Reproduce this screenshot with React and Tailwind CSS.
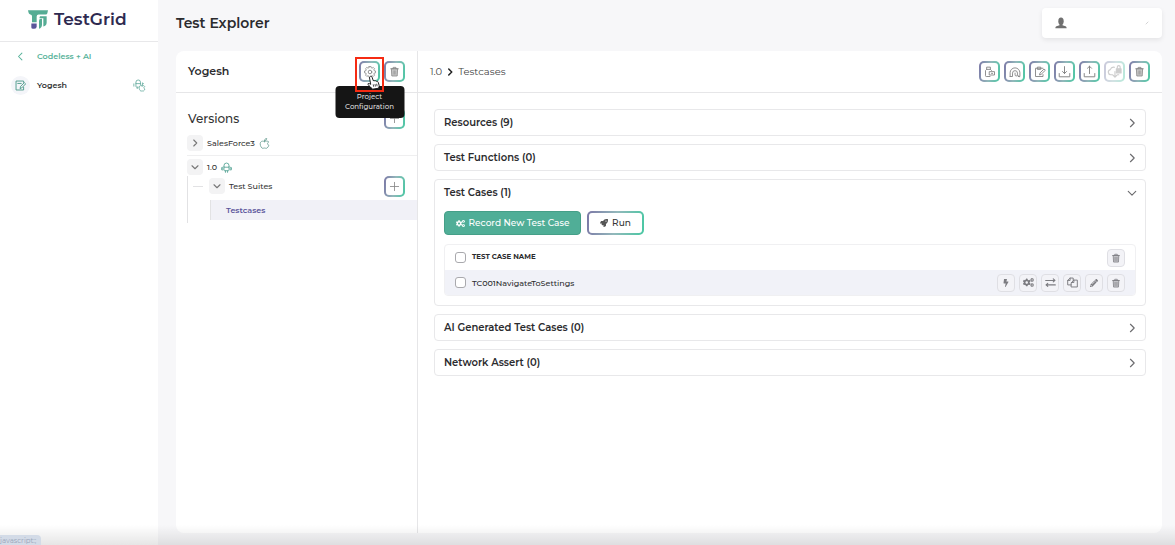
import React from "react";
import { FaCogs, FaBolt, FaPencilAlt, FaRocket } from "react-icons/fa";

const gradientBorder =
  "border-2 border-transparent [background:linear-gradient(#fff,#fff)_padding-box,linear-gradient(100deg,#7b77a6,#93b8bb_50%,#48c8a3)_border-box]";

function Svg({ className, children, strokeWidth = 1.2, box = 16 }) {
  return (
    <svg
      viewBox={`0 0 ${box} ${box}`}
      fill="none"
      stroke="currentColor"
      strokeWidth={strokeWidth}
      strokeLinecap="round"
      strokeLinejoin="round"
      className={className}
      aria-hidden="true"
    >
      {children}
    </svg>
  );
}

function Chevron({ dir = "right", className, strokeWidth = 1.8 }) {
  const d = { right: "M5.5 2l6 6-6 6", left: "M10.5 2l-6 6 6 6", down: "M2 5.5l6 6 6-6" }[dir];
  return (
    <Svg className={className} strokeWidth={strokeWidth}>
      <path d={d} />
    </Svg>
  );
}

function Trash({ className }) {
  return (
    <Svg className={className} strokeWidth={1.2}>
      <path d="M2.500 4h11M6 4V2h4v2" />
      <path d="M3.5 4.5l.6 10h7.8l.6-10z" fill="currentColor" fillOpacity="0.4" />
      <path d="M6.2 7v5M9.800 7v5M8 7v5" strokeWidth="0.8" />
    </Svg>
  );
}

function NotePencil({ className }) {
  return (
    <Svg className={className} strokeWidth={1.3}>
      <path d="M12.500 10.500v4H1.500v-13h11v2" />
      <path d="M4 5h5" />
      <path d="M7.500 12l.7-2.800L13.600 3.800l1.900 1.800-5.400 5.600z" />
    </Svg>
  );
}

function Apple({ className }) {
  return (
    <Svg className={className}>
      <path d="M8 5.200C6.400 4.200 3.700 4.200 2.300 6.200.9 8.600 2.200 12.700 4.400 14.700c1.200.8 2.400-.1 3.600-.1s2.400.9 3.600.1c1.300-1 2.300-2.500 2.800-4-2.800-1.100-2.500-3.900-.2-5-1.700-1.600-4.400-1.500-6.200-.5z" />
      <path d="M8 4C8 2 9.200.8 11.200.600 11.200 2.600 10 4 8 4z" />
    </Svg>
  );
}

function Android({ className }) {
  return (
    <Svg className={className} strokeWidth={1.3}>
      <path d="M4.300 7V5.500a3.700 4 0 0 1 7.400 0V7z" />
      <path d="M4.300 7v4.700a1 1 0 0 0 1 1h5.400a1 1 0 0 0 1-1V7" />
      <path d="M.8 8.500a.9.9 0 0 1 1.800 0v2.500a.9.9 0 0 1-1.800 0zM13.400 8.500a.9.9 0 0 1 1.800 0v2.500a.9.900 0 0 1-1.800 0z" />
      <path d="M6.500 13v2M9.500 13v2" />
    </Svg>
  );
}

function Devices({ className }) {
  return (
    <Svg className={className} box={20} strokeWidth={1.3}>
      <path d="M4.500 6.500V5a3.500 3.500 0 0 1 7 0v1.500zM11.500 6.500v2M4.500 6.500v5a1 1 0 0 0 1 1H8M1.300 7.500v3.500M14.500 6v2M6.500 12.800v2" />
      <path d="M14 10.500c-1.500-1-4-.5-4.500 1.800-.5 2.500 1 5.500 2.500 6.200.8.300 1.300-.2 2-.2s1.200.5 2 .2c1.200-.6 2-2 2.300-3-2-.9-1.900-3-.3-4-.9-1.500-2.700-1.700-4-1zM14 9.500c0-1.400.9-2.200 2.200-2.500" />
    </Svg>
  );
}

function Gear({ className }) {
  return (
    <Svg className={className} strokeWidth={1.2}>
      <path d="M6.700 1h2.600l.4 1.900 1.300.6 1.700-1 1.800 1.800-1 1.700.6 1.300 1.900.4v2.600l-1.900.4-.6 1.300 1 1.700-1.800 1.800-1.700-1-1.300.6-.4 1.900H6.700l-.4-1.900-1.300-.6-1.700 1-1.800-1.800 1-1.700-.6-1.300L0 10.300V7.700l1.900-.4L2.500 6l-1-1.700 1.800-1.800 1.700 1 1.300-.6z" transform="translate(.7 -.4) scale(.92)" />
      <circle cx="8" cy="8" r="2.400" />
    </Svg>
  );
}

function Logo() {
  return (
    <svg viewBox="0 0 60 56" className="h-[19px] w-5" aria-hidden="true">
      <path d="M0 0h60l-2 9a5 5 0 0 1-5 4H32a6 6 0 0 0-6 6v17H12V18a5 5 0 0 0-5-5C3 12 1 7 0 0z" fill="#55ac94" />
      <path d="M10 40h16v9a7 7 0 0 1-7 7h-4a5 5 0 0 1-5-5z" fill="#5a559a" />
      <path d="M33 32a6 6 0 0 1 6-6h3v18a13 13 0 0 1-9 12z" fill="#55ac94" />
      <path d="M36 18h20v20a12 12 0 0 1-10 11V24H34z" fill="#55ac94" />
    </svg>
  );
}

function ToolButton({ label, children, faded = false }) {
  return (
    <button
      type="button"
      aria-label={label}
      disabled={faded}
      className={`flex size-[21px] shrink-0 items-center justify-center rounded-[5px] text-[#858585] disabled:opacity-40 ${gradientBorder}`}
    >
      {children}
    </button>
  );
}

function RowButton({ label, children }) {
  return (
    <button
      type="button"
      aria-label={label}
      className="flex size-[18px] items-center justify-center rounded border border-[#dfdfe4] bg-[#f3f3f7] text-[#7c7c81]"
    >
      {children}
    </button>
  );
}

function Toggle({ label, dir }) {
  return (
    <button
      type="button"
      aria-label={label}
      className="flex size-4 shrink-0 items-center justify-center rounded bg-[#f3f3f4] text-[#777]"
    >
      <Chevron dir={dir} className="size-2" strokeWidth={2.2} />
    </button>
  );
}

function Panel({ title, open = false, children }) {
  return (
    <section className="rounded border border-[#e8e8ea] bg-white">
      <h3>
        <button
          type="button"
          aria-expanded={open}
          className="flex h-[25px] w-full items-center justify-between pr-2 pl-[9px] text-left text-[10px] font-semibold text-[#2b2b2e]"
        >
          {title}
          <Chevron dir={open ? "down" : "right"} className="size-[10px] text-[#6b6b6e]" />
        </button>
      </h3>
      {children}
    </section>
  );
}

function Checkbox({ label }) {
  return (
    <input
      type="checkbox"
      aria-label={label}
      className="block size-[11px] appearance-none rounded-[3px] border border-[#a9a9ad] bg-white"
    />
  );
}

function Sidebar() {
  return (
    <aside className="flex w-[158px] shrink-0 flex-col bg-white">
      <a href="#home" className="flex h-[42px] items-center gap-[6px] border-b border-[#e8e8ea] pb-[2px] pl-7">
        <Logo />
        <span className="text-[17px] font-semibold text-[#2e2a50]">TestGrid</span>
      </a>
      <nav className="flex flex-col">
        <a href="#codeless" className="flex h-7 items-center pl-4 text-[8px] font-semibold text-[#58b39b]">
          <Chevron dir="left" className="mr-3 size-[9px]" />
          Codeless + AI
        </a>
        <a href="#yogesh" className="flex h-[30px] items-center pr-3 pl-[11px] text-[8px] font-semibold text-[#333]">
          <span className="mr-[7px] flex size-[19px] items-center justify-center rounded-full bg-[#f4f5f9]">
            <NotePencil className="size-[11px] text-[#479687]" />
          </span>
          Yogesh
          <Devices className="ml-auto size-[13px] text-[#66ac9f]" />
        </a>
      </nav>
    </aside>
  );
}

function ProjectTree() {
  return (
    <section className="flex w-[242px] shrink-0 flex-col border-r border-[#e6e6e8]">
      <header className="flex h-[42px] items-center justify-between border-b border-[#e6e6e8] pr-3 pl-3">
        <h2 className="text-[11px] font-semibold text-[#2b2b2e]">Yogesh</h2>
        <div className="flex gap-1">
          <div className="relative">
            <ToolButton label="Project configuration">
              <Gear className="size-3" />
            </ToolButton>
            <div className="absolute -top-[4px] -left-1 z-20 h-[35px] w-[29px] border-2 border-[#f52b13]" />
            <div
              role="tooltip"
              className="absolute top-[25px] left-1/2 z-10 flex h-8 w-[69px] -translate-x-1/2 items-center justify-center rounded bg-[#151515] text-center text-[7px] leading-[10px] font-medium text-[#dedede]"
            >
              Project Configuration
            </div>
            <svg viewBox="0 0 14 16" className="absolute top-[14px] left-[8px] z-30 h-[15px] w-[13px]" aria-hidden="true">
              <path
                d="M3.500 1.500c.9-.5 1.700 0 2 .8L6.700 6c.8-.4 1.500-.1 1.700.3.8-.4 1.500 0 1.800.5.900-.3 1.600.1 1.900 1l1 3.400c.2 1-.2 2-.8 3l-6.500 1c-1-1.500-3.500-3.700-4.800-5C.2 9.400 1.700 8.300 4 10L2.700 3c-.1-.7.200-1.200.8-1.500z"
                fill="#fff"
                stroke="#111"
                strokeWidth="1"
              />
              <path d="M6.700 10l.5 2.600M8.600 9.700l.5 2.600M10.400 9.400l.5 2.600" stroke="#111" strokeWidth=".8" />
            </svg>
          </div>
          <ToolButton label="Delete project">
            <Trash className="size-[11px]" />
          </ToolButton>
        </div>
      </header>

      <div className="flex items-center justify-between pt-[15px] pr-3 pl-3">
        <h3 className="text-xs leading-5 font-medium text-[#333]">Versions</h3>
        <ToolButton label="Add version">
          <Svg className="size-[11px]"><path d="M8 2v12M2 8h12" /></Svg>
        </ToolButton>
      </div>

      <ul className="pl-[11px] text-[8px] font-medium text-[#333]">
        <li className="flex h-[27px] items-center border-b border-[#efeff0] pt-[2px]">
          <Toggle label="Expand SalesForce3" dir="right" />
          <span className="ml-1">SalesForce3</span>
          <Apple className="ml-1 size-[11px] text-[#6b9f94]" />
        </li>
        <li>
          <div className="flex h-5 items-center pt-[2px]">
            <Toggle label="Collapse 1.0" dir="down" />
            <span className="ml-1">1.0</span>
            <Android className="ml-1 size-[11px] text-[#58a596]" />
          </div>
          <ul className="border-l border-[#e2e2e4] pb-[3px]">
            <li>
              <div className="flex h-5 items-center pr-3">
                <span className="ml-[5px] w-[10px] border-t border-[#e2e2e4]" />
                <span className="mr-1 ml-[6px] flex">
                  <Toggle label="Collapse Test Suites" dir="down" />
                </span>
                <span className="mr-auto">Test Suites</span>
                <ToolButton label="Add test suite">
                  <Svg className="size-[11px]"><path d="M8 2v12M2 8h12" /></Svg>
                </ToolButton>
              </div>
              <a
                href="#testcases"
                className="mt-1 ml-[22px] flex h-5 items-center border-l border-[#e2e2e4] bg-[#f1f1f7] pl-[15px] font-semibold text-[#5b559b]"
              >
                Testcases
              </a>
            </li>
          </ul>
        </li>
      </ul>
    </section>
  );
}

function Toolbar() {
  return (
    <div className="flex gap-1">
      <ToolButton label="Copy build">
        <Svg className="size-3">
          <path d="M8 14H3a1 1 0 0 1-1-1V6l1.500-1.500h5L10 6M3.500 4.500V1.500h5v3" />
          <path d="M7.500 7.500H14V12H7.500zM10 9.800h1.500" />
        </Svg>
      </ToolButton>
      <ToolButton label="Inspect">
        <Svg className="size-3">
          <path d="M1.500 14V9a6.500 6.500 0 0 1 13 0v5h-2.200M1.500 14h3.200V9.500a3.300 3.300 0 0 1 6.600 0v2.200a1.600 1.600 0 1 1-3.200 0V9.500M11.500 12l2 2.500" />
        </Svg>
      </ToolButton>
      <ToolButton label="Edit">
        <Svg className="size-3">
          <path d="M12 11.500V14H2V3h10M5 1.500h4v3H5z" />
          <path d="M7.500 11.500l.6-2.300L13.400 4l1.700 1.700-5.300 5.200z" />
        </Svg>
      </ToolButton>
      <ToolButton label="Import">
        <Svg className="size-[13px]">
          <path d="M1.500 10.500v4h13v-4M8 2v8.500M5.500 8L8 10.500 10.500 8" />
        </Svg>
      </ToolButton>
      <ToolButton label="Export">
        <Svg className="size-[13px]">
          <path d="M1.500 10.500v4h13v-4M8 10.500v-9M5.500 4L8 1.500 10.500 4" />
        </Svg>
      </ToolButton>
      <ToolButton label="Sync (locked)" faded>
        <Svg className="size-[15px]">
          <path d="M6 11.500H4A2.800 2.800 0 0 1 3.500 6 4 4 0 0 1 8 3.500M8.500 8v6M6.500 12l2 2 2-2M11 11.500h1.500" />
          <path d="M10 5h5v4.500h-5z" fill="currentColor" />
          <path d="M11 5V3.200a1.500 1.500 0 0 1 3 0V5" />
        </Svg>
      </ToolButton>
      <ToolButton label="Delete version">
        <Trash className="size-[11px]" />
      </ToolButton>
    </div>
  );
}

function TestCases() {
  return (
    <div className="px-[9px] pt-[6px] pb-[9px]">
      <div className="flex gap-[6px]">
        <button
          type="button"
          className="flex h-6 w-[137px] items-center justify-center gap-1 rounded border border-[#459f88] bg-[#50ae97] text-[9px] font-medium text-white"
        >
          <FaCogs className="size-[9px]" />
          Record New Test Case
        </button>
        <button
          type="button"
          className={`flex h-6 w-[57px] items-center justify-center gap-1 rounded-[5px] text-[9px] font-medium text-[#333] ${gradientBorder}`}
        >
          <FaRocket className="size-2 text-[#555]" />
          Run
        </button>
      </div>
      <div className="mt-[9px] overflow-hidden rounded border border-[#f0f0f2]">
        <table className="w-full text-left text-[8px] text-[#2b2b2e]">
          <thead>
            <tr className="h-[25px]">
              <th scope="col" className="w-[27px] pl-[10px]"><Checkbox label="Select all test cases" /></th>
              <th scope="col" className="text-[7px] font-bold">TEST CASE NAME</th>
              <th scope="col" className="pr-[10px]">
                <div className="flex justify-end">
                  <RowButton label="Delete selected"><Trash className="size-[10px]" /></RowButton>
                </div>
              </th>
            </tr>
          </thead>
          <tbody>
            <tr className="h-[25px] bg-[#f1f2f8]">
              <td className="pl-[10px]"><Checkbox label="Select TC001NavigateToSettings" /></td>
              <td className="font-medium">TC001NavigateToSettings</td>
              <td className="pr-[10px]">
                <div className="flex justify-end gap-1">
                  <RowButton label="Quick run"><FaBolt className="size-2" /></RowButton>
                  <RowButton label="Configure"><FaCogs className="size-[11px]" /></RowButton>
                  <RowButton label="Move">
                    <Svg className="size-[11px]" strokeWidth={1.6}>
                      <path d="M1 5h13M12 2.800L14.500 5 12 7.200M15 11.500H2M4 9.300L1.500 11.500 4 13.700" />
                    </Svg>
                  </RowButton>
                  <RowButton label="Duplicate">
                    <Svg className="size-[11px]" strokeWidth={1.4}>
                      <path d="M6 11.500H1V5l3.500-3.500H9V5M4.500 1.500V5H1" />
                      <path d="M6.500 8L10 4.500h5v10H6.500zM10 4.500V8H6.500" />
                    </Svg>
                  </RowButton>
                  <RowButton label="Edit"><FaPencilAlt className="size-2" /></RowButton>
                  <RowButton label="Delete"><Trash className="size-[10px]" /></RowButton>
                </div>
              </td>
            </tr>
          </tbody>
        </table>
      </div>
    </div>
  );
}

export default function App() {
  return (
    <div className="relative flex min-h-screen bg-[#f7f7f9] font-['Montserrat','Inter',sans-serif]">
      <Sidebar />
      <main className="flex min-w-0 flex-1 flex-col pr-[13px] pb-3 pl-[18px]">
        <header className="flex h-[51px] items-start justify-between pt-2">
          <h1 className="text-[14px] leading-[30px] font-semibold text-[#2b2b2e]">Test Explorer</h1>
          <button
            type="button"
            aria-label="Account"
            className="flex h-[30px] w-[120px] items-center justify-between rounded bg-white px-[13px] shadow-[0_2px_5px_rgba(0,0,0,0.08)]"
          >
            <svg viewBox="0 0 16 16" className="size-3 text-[#707070]" fill="currentColor" aria-hidden="true">
              <ellipse cx="8" cy="5.500" rx="3.600" ry="4.800" />
              <path d="M6 9h4v2l4 1.300c1 .4 1.500 1.200 1.500 2.700H.5c0-1.500.5-2.300 1.500-2.700L6 11z" />
            </svg>
            <Svg className="size-1 text-[#c4c4c6]" strokeWidth={3}><path d="M4 12l8-8" /></Svg>
          </button>
        </header>
        <div className="flex flex-1 rounded-lg bg-white">
          <ProjectTree />
          <section className="flex min-w-0 flex-1 flex-col">
            <header className="flex h-[42px] items-center justify-between border-b border-[#e6e6e8] pr-3 pl-3">
              <nav aria-label="Breadcrumb" className="flex items-center gap-1 text-[10px] text-[#444]">
                <a href="#1.0">1.0</a>
                <Chevron className="size-2 text-[#222]" strokeWidth={3} />
                <a href="#testcases">Testcases</a>
              </nav>
              <Toolbar />
            </header>
            <div className="flex flex-col gap-2 py-4 pr-4 pl-4">
              <Panel title="Resources (9)" />
              <Panel title="Test Functions (0)" />
              <Panel title="Test Cases (1)" open>
                <TestCases />
              </Panel>
              <Panel title="AI Generated Test Cases (0)" />
              <Panel title="Network Assert (0)" />
            </div>
          </section>
        </div>
      </main>
      <div className="pointer-events-none absolute inset-x-0 bottom-0 h-5 bg-linear-to-b from-transparent to-black/10" />
      <div className="absolute bottom-0 left-0 h-[10px] w-[41px] overflow-hidden rounded-tr-sm bg-[#d3dbe7] text-[7px] leading-[12px] text-[#98a4b8]">
        javascript:;
      </div>
    </div>
  );
}
